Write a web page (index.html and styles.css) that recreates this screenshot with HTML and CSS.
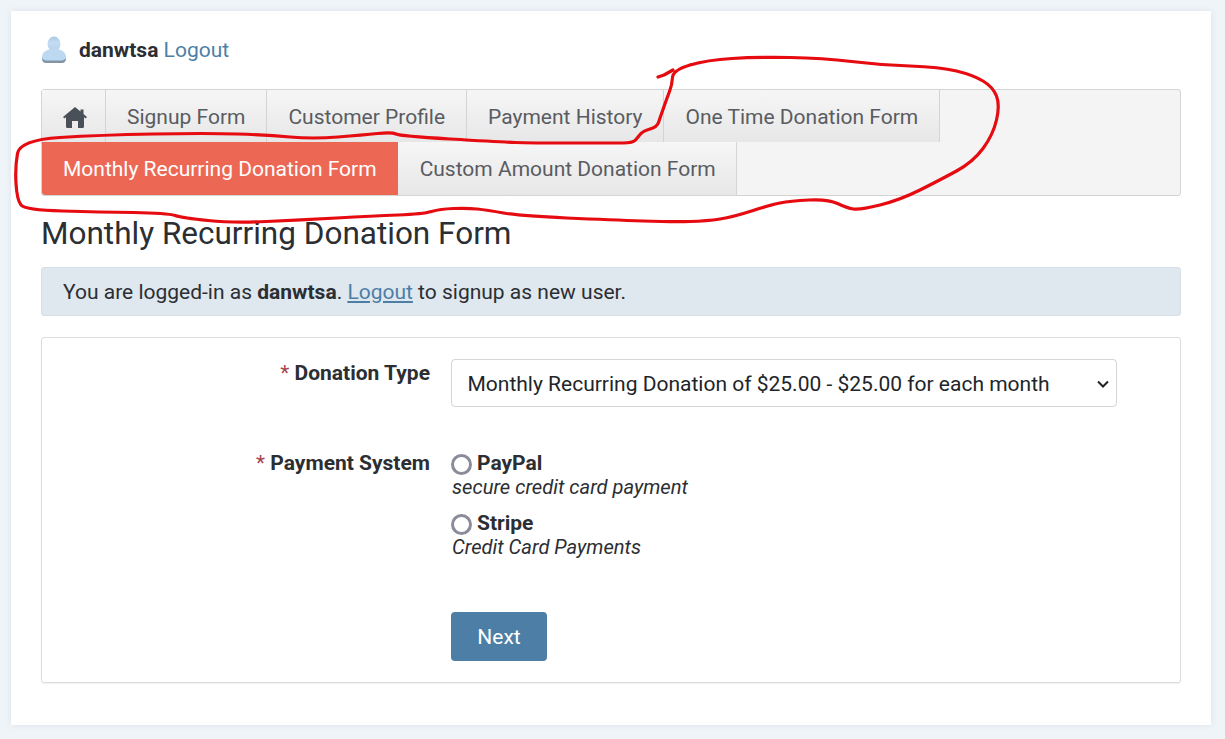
FILE: index.html
```html
<!DOCTYPE html>
<html lang="en">
<head>
<meta charset="utf-8">
<title>Monthly Recurring Donation Form</title>
<link rel="stylesheet" href="styles.css">
</head>
<body>
<main class="card">
  <div class="user">
    <svg class="avatar" viewBox="0 0 26 28" width="26" height="28" aria-hidden="true">
      <defs>
        <linearGradient id="av" x1="0" y1="0" x2="0" y2="1"><stop offset="0" stop-color="#a9c6df"/><stop offset=".4" stop-color="#c3ddf3"/><stop offset="1" stop-color="#b4d2ec"/></linearGradient>
      </defs>
      <ellipse cx="13" cy="8" rx="6.500" ry="7.500" fill="url(#av)"/>
      <path d="M1 21c0-5 5-7 8-8h8c3 1 8 3 8 8v3c0 2-2 3-4 3H5c-2 0-4-1-4-3z" fill="#bcd9f1"/>
      <path d="M1 22c0 3 2 5 4 5h16c2 0 4-2 4-5-1 1.500-3 2.500-4 2.500H5c-1 0-3-1-4-2.500z" fill="#8494a5"/>
    </svg>
    <span class="user-text"><b>danwtsa</b> <a href="#" class="plain">Logout</a></span>
  </div>

  <nav class="tabs">
    <a class="tab home" href="#" aria-label="Home">
      <svg viewBox="0 0 24 21" width="24" height="21" aria-hidden="true"><path fill="#495057" d="M12 0 17.500 4.600V2.500H20.500V7.100L24 10 22.700 11.500 21 10.200V19.500C21 20.300 20.500 21 19.700 21H15V14H9V21H4.300C3.500 21 3 20.300 3 19.500V10.200L1.300 11.500 0 10Z"/></svg>
    </a>
    <a class="tab" href="#">Signup Form</a>
    <a class="tab" href="#">Customer Profile</a>
    <a class="tab" href="#">Payment History</a>
    <a class="tab" href="#">One Time Donation Form</a>
    <a class="tab active" href="#">Monthly Recurring Donation Form</a>
    <a class="tab lower" href="#">Custom Amount Donation Form</a>
  </nav>

  <h1 class="title">Monthly Recurring Donation Form</h1>

  <p class="notice">You are logged-in as <b>danwtsa</b>. <a href="#">Logout</a> to signup as new user.</p>

  <form class="panel">
    <div class="row row-type">
      <div class="label"><span class="req">*</span> Donation Type</div>
      <div class="field">
        <select class="select">
          <option>Monthly Recurring Donation of $25.00 - $25.00 for each month</option>
        </select>
        <svg class="chevron" viewBox="0 0 12 8" width="12" height="8" aria-hidden="true"><path d="M1 1.500 6 6.500 11 1.500" fill="none" stroke="#222" stroke-width="2"/></svg>
      </div>
    </div>
    <div class="row row-pay">
      <div class="label"><span class="req">*</span> Payment System</div>
      <div class="field">
        <div class="opt">
          <label class="opt-head"><span class="radio"></span><b>PayPal</b></label>
          <em>secure credit card payment</em>
        </div>
        <div class="opt">
          <label class="opt-head"><span class="radio"></span><b>Stripe</b></label>
          <em>Credit Card Payments</em>
        </div>
      </div>
    </div>
    <div class="row row-btn">
      <div class="label"></div>
      <div class="field"><button type="button" class="btn">Next</button></div>
    </div>
  </form>
</main>

<svg class="scribble" width="1225" height="739" viewBox="0 0 1225 739" aria-hidden="true">
  <path d="M690 65 Q707 60 732 58.500 Q757 57 790 57.500 Q823 58 851.500 61.500 Q880 65 910 66 Q940 67 956.500 71 Q973 75 983 81 Q993 87 996.500 96 Q1000 105 996.500 120 Q993 135 983 148.500 Q973 162 956.500 171 Q940 180 920 190 Q900 200 880 205 Q860 210 853.500 209 Q847 208 837.500 203.500 Q828 199 809 200 Q790 201 780 203 Q770 205 751.500 211 Q733 217 720 219 Q707 221 690 221.500 Q673 222 643 221 Q613 220 566.500 218 Q520 216 503.500 213 Q487 210 477 209 Q467 208 453.500 208.500 Q440 209 431.500 211.500 Q423 214 398 215 Q373 216 336.500 218 Q300 220 266.500 221.500 Q233 223 208 220.500 Q183 218 175 215.500 Q167 213 133.500 212.500 Q100 212 62.500 211 Q25 210 21 205 Q17 200 16 183.500 Q15 167 17.500 153.500 Q20 140 60 137.500 Q100 135 153.500 134 Q207 133 237 134 Q267 135 290 137 Q313 139 338 137 Q363 135 377.500 133.500 Q392 132 396 134 Q400 136 450 139 Q500 142 515 142.500 Q530 143 571.500 143 Q613 143 623 143 Q633 143 635.500 140 Q638 137 640.500 134 Q643 131 650 129 Q657 127 658.500 122.500 Q660 118 663.500 108 Q667 98 669.500 91.500 Q672 85 672.500 77.500 Q673 70 690 65 M658 77 L664 75 L673 70" fill="none" stroke="#e60b10" stroke-width="3.200" stroke-linecap="round" stroke-linejoin="round"/>
</svg>
</body>
</html>
```
FILE: styles.css
```css
* { box-sizing: border-box; }
html, body { margin: 0; height: 100%; }
body {
  background: #eff4f8;
  font-family: Roboto, "Liberation Sans", sans-serif;
  font-size: 21px;
  line-height: 1.5;
  color: #2b2e32;
  padding: 11px 14px 14px 11px;
  overflow: hidden;
  position: relative;
}
a { color: #4d7fa6; }
.card {
  background: #fff;
  height: 714px;
  padding: 20px 30px 0;
  box-shadow: 0 0 6px rgba(90, 110, 130, .12);
}
.user {
  display: flex;
  align-items: center;
  gap: 12px;
  height: 38px;
  margin-bottom: 20px;
}
.user-text { padding-top: 2px; }
.plain { text-decoration: none; }
.tabs {
  display: flex;
  flex-wrap: wrap;
  background: #f4f4f4;
  border: 1px solid #d4d4d4;
  border-radius: 3px;
  height: 107px;
  align-content: flex-start;
}
.tab {
  height: 52px;
  padding: 4px 21px 0;
  display: flex;
  align-items: center;
  color: #595c61;
  text-decoration: none;
  border-right: 1px solid #d4d4d4;
  background: linear-gradient(#f6f6f6, #e7e7e7);
  white-space: nowrap;
}
.tab.home { width: 64px; justify-content: center; padding: 2px 0 0 2px; }
.tab.lower { height: 53px; padding: 2px 20px 0 22px; }
.tab.active {
  background: #ec6854;
  color: #fff;
  border-right: 0;
  height: 53px;
  padding-top: 2px;
  border-bottom-left-radius: 3px;
}
.title {
  margin: 14px 0 9px;
  font-size: 31.500px;
  font-weight: 400;
  line-height: 48px;
  color: #2b2e32;
}
.notice {
  margin: 0 0 21px;
  height: 49px;
  padding: 2px 21px 0;
  display: flex;
  align-items: center;
  white-space: pre;
  background: #dfe7ef;
  border: 1px solid #d6dee8;
  border-radius: 3px;
}
.panel {
  height: 346px;
  border: 1px solid #dcdcdc;
  border-radius: 3px;
  box-shadow: 0 1px 1px rgba(0, 0, 0, .06);
  padding-top: 21px;
}
.row { display: flex; }
.label {
  width: 388px;
  flex: none;
  text-align: right;
  font-weight: 700;
  white-space: nowrap;
}
.req { color: #a5454d; font-weight: 400; }
.field { margin-left: 21px; flex: none; width: 666px; position: relative; }
.row-type { height: 89px; }
.row-type .label { margin-top: -1px; }
.row-pay { height: 164px; }
.row-pay .label { line-height: 30px; }
.select {
  appearance: none;
  display: block;
  width: 666px;
  height: 48px;
  background: #fff;
  border: 1px solid #d6d6d6;
  border-radius: 4px;
  font: 400 21px Roboto, "Liberation Sans", sans-serif;
  color: #212529;
  padding: 2px 30px 0 15.500px;
}
.chevron { position: absolute; right: 8px; top: 21px; pointer-events: none; }
.opt { height: 60px; display: flex; flex-direction: column; }
.opt-head {
  display: flex;
  align-items: center;
  gap: 5px;
  height: 30px;
  padding-top: 2px;
}
.opt em { font-size: 20.150px; line-height: 24px; padding-left: 1px; margin-top: -3px; }
.radio {
  width: 21px;
  height: 21px;
  flex: none;
  border: 3px solid #8a8c99;
  border-radius: 50%;
  background: #fff;
}
.btn {
  display: block;
  width: 96px;
  height: 49px;
  background: #4d7fa6;
  color: #fff;
  border: 0;
  border-radius: 4px;
  font: 400 21px Roboto, "Liberation Sans", sans-serif;
}
.scribble { position: absolute; left: 0; top: 0; pointer-events: none; }
```
